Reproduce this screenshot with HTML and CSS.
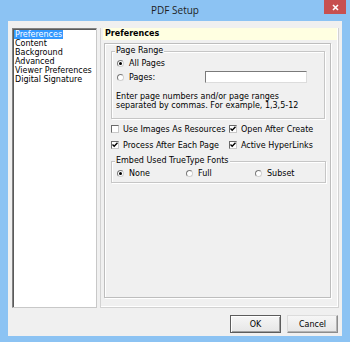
FILE: index.html
```html
<!DOCTYPE html>
<html lang="en">
<head>
<meta charset="UTF-8">
<title>PDF Setup</title>
<link rel="stylesheet" href="styles.css">
</head>
<body>

<div class="window">
  <div class="titlebar">
    <span class="title">PDF Setup</span>
    <span class="close">
      <svg width="7" height="7" viewBox="0 0 7 7"><path d="M1 1 L6 6 M6 1 L1 6" stroke="#fff" stroke-width="1.6"/></svg>
    </span>
  </div>

  <div class="client">
    <div class="main">
      <ul class="list">
        <li><span class="selected">Preferences</span></li>
        <li><span>Content</span></li>
        <li><span>Background</span></li>
        <li><span>Advanced</span></li>
        <li><span>Viewer Preferences</span></li>
        <li><span>Digital Signature</span></li>
      </ul>

      <div class="panel">
        <div class="panel-head">Preferences</div>
        <div class="panel-body">
          <fieldset class="group range">
            <legend>Page Range</legend>
            <div class="opt"><span class="radio on"></span>All Pages</div>
            <div class="opt"><span class="radio"></span><span class="lbl">Pages:</span><span class="field"></span></div>
            <p class="hint">Enter page numbers and/or page ranges<br>separated by commas. For example, 1,3,5-12</p>
          </fieldset>

          <div class="checks">
            <div class="chk"><span class="box"></span>Use Images As Resources</div>
            <div class="chk"><span class="box on"><svg width="6" height="6" viewBox="0 0 6 6"><path d="M0.5 2.5 L2.2 4.2 L5.5 0.8" fill="none" stroke="#000" stroke-width="1.4"/></svg></span>Open After Create</div>
            <div class="chk"><span class="box on"><svg width="6" height="6" viewBox="0 0 6 6"><path d="M0.5 2.5 L2.2 4.2 L5.5 0.8" fill="none" stroke="#000" stroke-width="1.4"/></svg></span>Process After Each Page</div>
            <div class="chk"><span class="box on"><svg width="6" height="6" viewBox="0 0 6 6"><path d="M0.5 2.5 L2.2 4.2 L5.5 0.8" fill="none" stroke="#000" stroke-width="1.4"/></svg></span>Active HyperLinks</div>
          </div>

          <fieldset class="group fonts">
            <legend>Embed Used TrueType Fonts</legend>
            <div class="opts">
              <div class="opt"><span class="radio on"></span>None</div>
              <div class="opt"><span class="radio"></span>Full</div>
              <div class="opt"><span class="radio"></span>Subset</div>
            </div>
          </fieldset>
        </div>
      </div>
    </div>

    <div class="buttons">
      <button class="btn default">OK</button>
      <button class="btn">Cancel</button>
    </div>
  </div>
</div>

</body>
</html>
```

FILE: styles.css
```css
* {
  box-sizing: border-box;
}

body {
  margin: 0;
  font-family: "DejaVu Sans", sans-serif;
  font-size: 8px;
  color: #000;
}

.window {
  width: 350px;
  height: 342px;
  background: #8cc3f3;
  display: flex;
  flex-direction: column;
}

.titlebar {
  height: 21px;
  position: relative;
  text-align: center;
}

.title {
  font-family: "Open Sans", sans-serif;
  font-size: 10px;
  line-height: 20px;
  color: #1e1e1e;
}

.close {
  position: absolute;
  top: 0;
  right: 4px;
  width: 22px;
  height: 14px;
  background: #c75050;
  display: flex;
  align-items: center;
  justify-content: center;
}

.client {
  flex: 1;
  margin: 0 8px 6px 8px;
  background: #f0f0f0;
  padding: 7px 3px 3px 4px;
  display: flex;
  flex-direction: column;
}

.main {
  display: flex;
  gap: 3px;
  height: 280px;
}

/* left list */
.list {
  width: 85px;
  margin: 0;
  padding: 1px;
  list-style: none;
  background: #fff;
  border: 1px solid;
  border-color: #828282 #c8c8c8 #c8c8c8 #828282;
  box-shadow: inset 1px 1px 0 #5a5a5a;
}

.list li {
  height: 9px;
  line-height: 9px;
  white-space: nowrap;
}

.list span {
  display: inline-block;
  padding: 0 1px;
}

.list .selected {
  background: #3399ff;
  color: #fff;
}

/* right panel */
.panel {
  width: 239px;
  display: flex;
  flex-direction: column;
  border: 1px solid #d2d2d2;
  border-top: none;
  box-shadow: inset -1px -1px 0 #fff;
}

.panel-head {
  height: 12px;
  line-height: 12px;
  margin: 0 1px 0 2px;
  padding-left: 2px;
  background: #ffffe1;
  font-weight: bold;
}

.panel-body {
  flex: 1;
  margin: 3px 7px 9px 3px;
  padding: 2px 5px 0 6px;
  border: 1px solid #bdbdbd;
  box-shadow: 1px 1px 0 #fff, inset 1px 1px 0 #fff;
}

.group {
  margin: 0;
  padding: 0 3px 8px 3px;
  border: 1px solid #c6c6c6;
  box-shadow: 1px 1px 0 #fff, inset 1px 1px 0 #fff;
}

.group legend {
  padding: 0 1px;
  line-height: 10px;
  background: #f0f0f0;
  position: relative;
}

.opt {
  height: 14px;
  display: flex;
  align-items: center;
  padding-left: 2px;
  white-space: nowrap;
}

.radio {
  width: 7px;
  height: 7px;
  margin-right: 5px;
  border-radius: 50%;
  background: #fff;
  border: 1px solid;
  border-color: #7a7a7a #d0d0d0 #d0d0d0 #7a7a7a;
  display: flex;
  align-items: center;
  justify-content: center;
  flex-shrink: 0;
}

.radio.on::after {
  content: "";
  width: 3px;
  height: 3px;
  border-radius: 50%;
  background: #000;
}

.lbl {
  width: 76px;
}

.field {
  width: 102px;
  height: 12px;
  background: #fff;
  border: 1px solid;
  border-color: #7a7a7a #dcdcdc #dcdcdc #7a7a7a;
}

.hint {
  margin: 8px 0 0 1px;
  line-height: 9px;
  white-space: nowrap;
}

.checks {
  display: grid;
  grid-template-columns: 118px auto;
  row-gap: 4px;
  margin: 4px 0 5px 0;
}

.chk {
  height: 12px;
  display: flex;
  align-items: center;
  white-space: nowrap;
}

.box {
  width: 8px;
  height: 8px;
  margin-right: 4px;
  background: #fff;
  border: 1px solid;
  border-color: #6a6a6a #c8c8c8 #c8c8c8 #6a6a6a;
  display: flex;
  align-items: center;
  justify-content: center;
}

.box svg {
  display: block;
}

.fonts {
  padding-bottom: 2px;
}

.opts {
  display: flex;
}

.opts .opt {
  width: 69px;
}

/* bottom buttons */
.buttons {
  display: flex;
  justify-content: flex-end;
  gap: 6px;
  margin-top: 7px;
  padding-right: 1px;
}

.btn {
  width: 51px;
  height: 18px;
  padding: 0;
  font-family: "DejaVu Sans", sans-serif;
  font-size: 8px;
  color: #000;
  background: linear-gradient(#f6f6f6, #e6e6e6);
  border: 1px solid;
  border-color: #dcdcdc #8c8c8c #8c8c8c #dcdcdc;
  box-shadow: inset -1px -1px 0 #b4b4b4;
}

.btn.default {
  border: 1px solid #5c5c5c;
  box-shadow: inset 1px 1px 0 #fff, inset -1px -1px 0 #a0a0a0;
}
```
